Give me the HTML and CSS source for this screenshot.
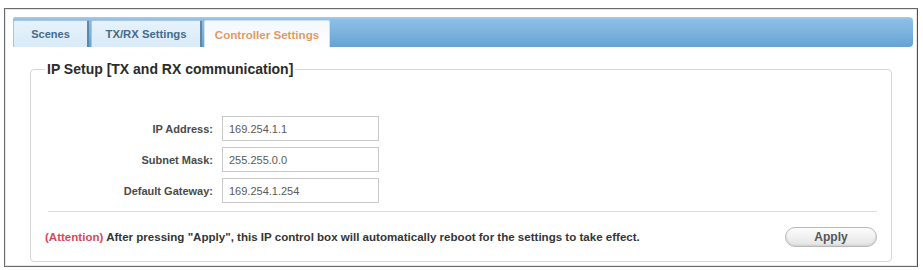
FILE: index.html
```html
<!DOCTYPE html>
<html>
<head>
<meta charset="utf-8">
<link rel="stylesheet" href="styles.css">
</head>
<body>
<div class="frame">
  <div class="tabbar">
    <div class="tab tab-scenes">Scenes</div>
    <div class="tab tab-txrx">TX/RX Settings</div>
    <div class="tab tab-active">Controller Settings</div>
  </div>
  <fieldset class="box">
    <legend class="legend">IP Setup [TX and RX communication]</legend>
    <div class="form">
      <label class="lbl">IP Address:</label>
      <div class="inp">169.254.1.1</div>
      <label class="lbl">Subnet Mask:</label>
      <div class="inp">255.255.0.0</div>
      <label class="lbl">Default Gateway:</label>
      <div class="inp">169.254.1.254</div>
    </div>
    <div class="sep"></div>
    <div class="footer">
      <div class="note"><span class="attn">(Attention)</span> After pressing "Apply", this IP control box will automatically reboot for the settings to take effect.</div>
      <div class="btn">Apply</div>
    </div>
  </fieldset>
</div>
</body>
</html>
```
FILE: styles.css
```css
html, body {
  margin: 0;
  padding: 0;
  background: #ffffff;
  font-family: "Liberation Sans", Arial, sans-serif;
}
.frame {
  margin: 8px 5px 0 4px;
  height: 259px;
  border: 1px solid #6a6a6a;
  border-right-color: #505050;
  box-shadow: inset 0 0 0 1px #e6e6e6;
  padding: 8px 4px 0 8px;
  box-sizing: border-box;
}
.tabbar {
  height: 30px;
  display: flex;
  align-items: flex-end;
  gap: 2px;
  border-radius: 2px 4px 4px 2px;
  background: linear-gradient(#a9cdea 0, #8dbde4 3px, #7cb3df 50%, #64a3d4 100%);
}
.tab {
  height: 27px;
  box-sizing: border-box;
  display: flex;
  align-items: center;
  justify-content: center;
  font-size: 11px;
  font-weight: bold;
  color: #466b8c;
  border-radius: 2px 2px 0 0;
}
.tab-scenes, .tab-txrx {
  background: linear-gradient(#e6f2fb, #d8ebf8);
  border: 1px solid #a8c8e2;
  border-right: 2px solid #5f87a8;
  border-bottom: none;
}
.tab-scenes { width: 76px; }
.tab-txrx { width: 111px; font-size: 11.3px; }
.tab-active {
  width: 126px;
  font-size: 11.6px;
  background: linear-gradient(#f3f8fc, #ffffff);
  color: #e39a62;
  border: 1px solid #cfe1ef;
  border-bottom: none;
}
.box {
  margin: 14px 21px 0 17px;
  padding: 0 14px 0 14px;
  border: 1px solid #d6d6d6;
  border-radius: 4px;
  height: 201px;
  box-sizing: border-box;
}
.legend {
  padding: 0 2px;
  font-size: 14px;
  font-weight: bold;
  color: #2b2b2b;
}
.form {
  display: grid;
  grid-template-columns: 168px 157px;
  column-gap: 9px;
  row-gap: 6px;
  margin-top: 39px;
}
.lbl {
  font-size: 11px;
  font-weight: bold;
  color: #4a4a4a;
  text-align: right;
  display: flex;
  align-items: center;
  justify-content: flex-end;
}
.inp {
  height: 25px;
  box-sizing: border-box;
  border: 1px solid #c9c9c9;
  padding: 0 6px;
  font-size: 11px;
  color: #5a5a5a;
  display: flex;
  align-items: center;
}
.sep {
  height: 1px;
  background: #dddddd;
  margin: 8px 0 0 3px;
}
.footer {
  display: flex;
  align-items: center;
  justify-content: space-between;
  margin-top: 15px;
  padding-right: 0;
}
.note {
  font-size: 11.55px;
  font-weight: bold;
  color: #353535;
}
.attn {
  color: #d8485a;
}
.btn {
  width: 92px;
  height: 20px;
  box-sizing: border-box;
  border: 1px solid #b9b9b9;
  border-radius: 10px;
  background: linear-gradient(#fdfdfd, #e4e4e4);
  box-shadow: inset 0 -1px 2px #cfcfcf;
  font-size: 12px;
  font-weight: bold;
  color: #555555;
  display: flex;
  align-items: center;
  justify-content: center;
}
```
